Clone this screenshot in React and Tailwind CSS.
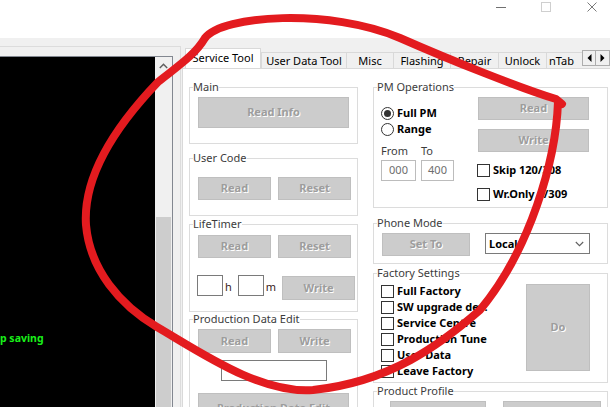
import React from "react";

const Btn = ({ children, className = "" }) => (
  <div
    className={
      "flex shrink-0 items-center justify-center border border-[#bfbfbf] bg-[#cccccc] text-[11px] font-bold text-[#9d9d9d] [text-shadow:1px_1px_0_#ffffff] whitespace-nowrap overflow-hidden " +
      className
    }
  >
    {children}
  </div>
);

const Group = ({ label, className = "", children }) => (
  <fieldset className={"min-w-0 shrink-0 border border-[#dcdcdc] " + className}>
    <legend className="ml-[3px] text-[11px] leading-[14px] text-[#3c3c3c]">{label}</legend>
    {children}
  </fieldset>
);

const Check = ({ label }) => (
  <div className="flex h-[16px] items-center gap-[3px]">
    <div className="h-[13px] w-[13px] shrink-0 border border-[#333333] bg-white" />
    <span className="whitespace-nowrap text-[11px] font-bold leading-[14px] text-black">{label}</span>
  </div>
);

const Radio = ({ label, checked }) => (
  <div className="flex h-[16px] items-center gap-[3px]">
    <div className="flex h-[13px] w-[13px] shrink-0 items-center justify-center rounded-full border border-[#333333] bg-white">
      {checked && <div className="h-[7px] w-[7px] rounded-full bg-[#333333]" />}
    </div>
    <span className="whitespace-nowrap text-[11px] font-bold leading-[14px] text-black">{label}</span>
  </div>
);

const Tab = ({ children, className = "" }) => (
  <div
    className={
      "flex h-[16px] shrink-0 items-center justify-center border-l border-t border-[#d9d9d9] bg-[#f0f0f0] text-[11px] leading-[14px] text-black whitespace-nowrap overflow-hidden " +
      className
    }
  >
    {children}
  </div>
);

export default function App() {
  return (
    <div className="relative h-[407px] w-[610px] overflow-hidden bg-[#f0f0f0] font-['Noto_Sans',sans-serif] text-[11px]">
      {/* Title bar */}
      <div className="flex h-[38px] items-start justify-end bg-white pr-[13px]">
        <div className="mt-[7px] h-px w-[10px] bg-[#707070]" />
        <div className="ml-[35px] mt-[2px] h-[10px] w-[10px] border border-[#cfcfcf]" />
        <svg className="ml-[36px] mt-[2px]" width="10" height="10" viewBox="0 0 10 10">
          <path d="M0.5 0.5 L9.5 9.5 M9.5 0.5 L0.5 9.5" stroke="#7a7a7a" strokeWidth="1" />
        </svg>
      </div>

      <div className="flex h-[369px]">
        {/* Left panel */}
        <div className="w-[181px] shrink-0 pt-[8px]">
          <div className="h-full border-r border-t border-[#dcdcdc] pt-[9px]">
            <div className="flex h-full w-[173px] border-r border-t border-[#828790]">
              <div className="w-[155px] shrink-0 bg-black pt-[274px]">
                <div className="text-[10.5px] font-bold leading-[14px] text-[#19f019]">p saving</div>
              </div>
              <div className="flex w-[17px] shrink-0 flex-col bg-[#f0f0f0]">
                <div className="flex h-[17px] items-center justify-center">
                  <svg width="9" height="6" viewBox="0 0 9 6">
                    <path d="M0.8 5 L4.5 1.3 L8.2 5" fill="none" stroke="#606060" strokeWidth="1.5" />
                  </svg>
                </div>
                <div className="mx-[1px] mt-[143px] flex-1 bg-[#cdcdcd]" />
              </div>
            </div>
          </div>
        </div>

        {/* Tab control */}
        <div className="flex min-w-0 flex-1 flex-col pl-[1px]">
          <div className="flex h-[30px] shrink-0 items-end">
            <div className="flex min-w-0 flex-1 items-end overflow-hidden pl-[3px]">
              <div className="relative z-10 -mb-px flex h-[21px] w-[76px] shrink-0 items-center justify-center border border-b-0 border-[#d9d9d9] bg-white pb-[2px] text-[11px] text-black">
                Service Tool
              </div>
              <Tab className="w-[85px]">User Data Tool</Tab>
              <Tab className="w-[47px]">Misc</Tab>
              <Tab className="w-[57px]">Flashing</Tab>
              <Tab className="w-[48px]">Repair</Tab>
              <Tab className="w-[48px]">Unlock</Tab>
              <Tab className="w-[40px] !justify-start pl-[2px]">nTab</Tab>
            </div>
            <div className="mb-[2px] flex h-[16px] w-[28px] shrink-0">
              <div className="flex w-[14px] items-center justify-center border border-[#adadad] bg-[#f0f0f0]">
                <svg width="5" height="8" viewBox="0 0 5 8">
                  <path d="M4.5 0 L0.5 4 L4.5 8 Z" fill="#000" />
                </svg>
              </div>
              <div className="flex w-[14px] items-center justify-center border border-l-0 border-[#adadad] bg-[#f0f0f0]">
                <svg width="5" height="8" viewBox="0 0 5 8">
                  <path d="M0.5 0 L4.5 4 L0.5 8 Z" fill="#000" />
                </svg>
              </div>
            </div>
          </div>

          {/* Tab page */}
          <div className="flex flex-1 gap-[15px] border-l border-t border-[#d9d9d9] bg-white pl-[6px] pt-[11px]">
            {/* Left column */}
            <div className="flex w-[169px] shrink-0 flex-col">
              <Group label="Main" className="h-[64px] w-[169px]">
                <div className="pl-[8px] pt-[3px]">
                  <Btn className="h-[31px] w-[151px]">Read Info</Btn>
                </div>
              </Group>

              <Group label="User Code" className="mt-[7px] h-[65px] w-[169px]">
                <div className="flex gap-[7px] pl-[8px] pt-[12px]">
                  <Btn className="h-[23px] w-[73px]">Read</Btn>
                  <Btn className="h-[23px] w-[73px]">Reset</Btn>
                </div>
              </Group>

              <Group label="LifeTimer" className="mt-[1px] h-[95px] w-[169px]">
                <div className="flex gap-[7px] pl-[8px] pt-[4px]">
                  <Btn className="h-[23px] w-[73px]">Read</Btn>
                  <Btn className="h-[23px] w-[73px]">Reset</Btn>
                </div>
                <div className="mt-[17px] flex items-start pl-[7px]">
                  <div className="h-[21px] w-[26px] border border-[#7a7a7a] bg-white" />
                  <span className="ml-[2px] mt-[5px] text-[11px] leading-[14px] text-[#3a1a1a]">h</span>
                  <div className="ml-[6px] h-[21px] w-[26px] border border-[#7a7a7a] bg-white" />
                  <span className="ml-[2px] mt-[5px] text-[11px] leading-[14px] text-[#3a1a1a]">m</span>
                  <Btn className="ml-[6px] mt-px h-[24px] w-[73px]">Write</Btn>
                </div>
              </Group>

              <Group label="Production Data Edit" className="h-[120px] w-[169px]">
                <div className="flex gap-[7px] pl-[8px] pt-[3px]">
                  <Btn className="h-[24px] w-[73px]">Read</Btn>
                  <Btn className="h-[24px] w-[73px]">Write</Btn>
                </div>
                <div className="ml-[31px] mt-[7px] h-[21px] w-[106px] border border-[#7a7a7a] bg-white" />
                <div className="pl-[8px] pt-[12px]">
                  <Btn className="h-[30px] w-[151px] !items-start pt-[6px]">Production Data Edit</Btn>
                </div>
              </Group>
            </div>

            {/* Right column */}
            <div className="flex w-[235px] shrink-0 flex-col">
              <Group label="PM Operations" className="h-[128px] w-[235px]">
                <div className="flex pl-[7px]">
                  <div className="w-[97px] shrink-0">
                    <div className="mt-[11px]">
                      <Radio label="Full PM" checked />
                      <Radio label="Range" />
                    </div>
                    <div className="mt-[7px] flex text-[11px] leading-[14px] text-[#3c3c3c]">
                      <span className="w-[40px]">From</span>
                      <span>To</span>
                    </div>
                    <div className="mt-[2px] flex gap-[5px]">
                      <div className="flex h-[21px] w-[35px] items-center justify-center border border-[#bcbcbc] bg-white text-[11px] text-[#6d6d6d]">
                        000
                      </div>
                      <div className="flex h-[21px] w-[33px] items-center justify-center border border-[#bcbcbc] bg-white text-[11px] text-[#6d6d6d]">
                        400
                      </div>
                    </div>
                  </div>
                  <div className="flex flex-col">
                    <Btn className="mt-[3px] h-[23px] w-[111px]">Read</Btn>
                    <Btn className="mt-[9px] h-[23px] w-[111px]">Write</Btn>
                    <div className="-ml-px mt-[10px]">
                      <Check label="Skip 120/308" />
                    </div>
                    <div className="-ml-px mt-[8px]">
                      <Check label="Wr.Only 1/309" />
                    </div>
                  </div>
                </div>
              </Group>

              <Group label="Phone Mode" className="mt-[8px] h-[48px] w-[235px]">
                <div className="flex items-start pl-[8px] pt-[3px]">
                  <Btn className="h-[23px] w-[88px]">Set To</Btn>
                  <div className="ml-[15px] flex h-[21px] w-[105px] items-center justify-between border border-[#7a7a7a] bg-white pl-[3px] pr-[5px]">
                    <span className="text-[11px] font-bold leading-[14px] text-black">Local</span>
                    <svg width="9" height="6" viewBox="0 0 9 6">
                      <path d="M0.8 1 L4.5 4.7 L8.2 1" fill="none" stroke="#606060" strokeWidth="1.1" />
                    </svg>
                  </div>
                </div>
              </Group>

              <Group label="Factory Settings" className="mt-[2px] h-[117px] w-[235px]">
                <div className="flex pl-[7px] pt-[3px]">
                  <div className="w-[145px] shrink-0">
                    <Check label="Full Factory" />
                    <Check label="SW upgrade dev." />
                    <Check label="Service Centre" />
                    <Check label="Production Tune" />
                    <Check label="User Data" />
                    <Check label="Leave Factory" />
                  </div>
                  <Btn className="mt-px h-[87px] w-[64px]">Do</Btn>
                </div>
              </Group>

              <Group label="Product Profile" className="mt-px h-[60px] w-[235px]">
                <div className="flex gap-[17px] pl-[16px] pt-[3px]">
                  <Btn className="h-[30px] w-[96px]"> </Btn>
                  <Btn className="h-[30px] w-[98px]"> </Btn>
                </div>
              </Group>
            </div>
          </div>
        </div>
      </div>

      {/* Red hand-drawn circle annotation */}
      <svg
        className="pointer-events-none absolute left-0 top-0 z-20"
        width="610"
        height="407"
        viewBox="0 0 610 407"
      >
        <path
          d="M 558 102 C 556 160, 530 250, 480 310 C 440 345, 390 382, 313 390 C 260 394, 200 352, 157 327 C 120 305, 90 270, 86 225 C 83 180, 112 130, 158 82 C 178 66, 195 55, 205 38 C 222 15, 330 8, 400 38 C 450 60, 520 88, 556 99 L 562 104"
          fill="none"
          stroke="#e31b1f"
          strokeWidth="8"
          strokeLinecap="round"
          strokeLinejoin="round"
        />
      </svg>
    </div>
  );
}
